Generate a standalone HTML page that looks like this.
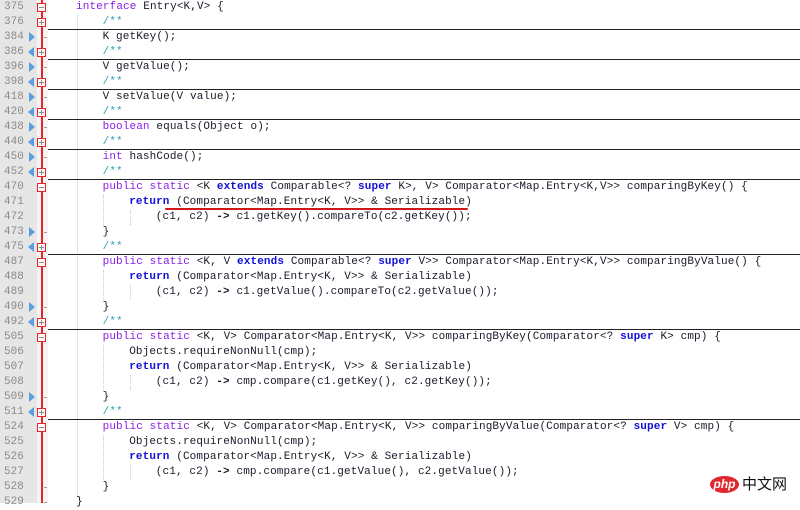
<!DOCTYPE html>
<html><head><meta charset="utf-8"><style>
body{margin:0;width:800px;height:503px;overflow:hidden;background:#fff;position:relative;font-family:"Liberation Mono",monospace;font-size:11px}
.g{position:absolute;left:0;top:0;width:37px;height:503px;background:#e6e6e6}
.f{position:absolute;left:37px;top:0;width:11px;height:503px;background:#f4f4f4}
.rl{position:absolute;left:41px;top:0;width:2px;height:503px;background:#e8242a}
.n{position:absolute;left:4px;width:24px;text-align:left;color:#8a8a8a;line-height:15px;font-size:11px}
.c{position:absolute;line-height:15px;white-space:pre;color:#1a1a2a;letter-spacing:0.12px}
.k{color:#8a1ee8}.b{color:#1010d8;font-weight:bold}.cm{color:#2aa0b0}.o{font-weight:bold}
.sep{position:absolute;left:48px;width:752px;height:1px;background:#222}
.bx{position:absolute;left:37px;width:9px;height:9px;border:1px solid #e8242a;background:#fff;box-sizing:border-box}
.bx:before{content:"";position:absolute;left:1px;top:3px;width:5px;height:1px;background:#888}
.bx.p:after{content:"";position:absolute;left:3px;top:1px;width:1px;height:5px;background:#888}
.ar{position:absolute;left:29px;width:0;height:0;border-top:5px solid transparent;border-bottom:5px solid transparent}
.ar.R{border-left:6px solid #5b9ee0}.ar.L{left:29px;border-right:6px solid #5b9ee0}
.tk{position:absolute;left:44px;width:3px;height:1px;background:#999}
.ig{position:absolute;width:0;border-left:1px dotted #ccc}
</style></head><body>
<div class="g"></div><div class="f"></div>
<div class="ig" style="left:77px;top:15px;height:480px"></div>
<div class="ig" style="left:103px;top:195px;height:30px"></div>
<div class="ig" style="left:130px;top:210px;height:15px"></div>
<div class="ig" style="left:103px;top:270px;height:30px"></div>
<div class="ig" style="left:130px;top:285px;height:15px"></div>
<div class="ig" style="left:103px;top:345px;height:45px"></div>
<div class="ig" style="left:130px;top:375px;height:15px"></div>
<div class="ig" style="left:103px;top:435px;height:45px"></div>
<div class="ig" style="left:130px;top:465px;height:15px"></div>
<div class="rl"></div>
<div id="rows"></div>
<script>
const L=[
[375,1,'<span class="k">interface</span> Entry&lt;K,V&gt; {','m'],
[376,2,'<span class="cm">/**</span>','p',1],
[384,2,'K getKey();','R'],
[386,2,'<span class="cm">/**</span>','pL',1],
[396,2,'V getValue();','R'],
[398,2,'<span class="cm">/**</span>','pL',1],
[418,2,'V setValue(V value);','R'],
[420,2,'<span class="cm">/**</span>','pL',1],
[438,2,'<span class="k">boolean</span> equals(Object o);','R'],
[440,2,'<span class="cm">/**</span>','pL',1],
[450,2,'<span class="k">int</span> hashCode();','R'],
[452,2,'<span class="cm">/**</span>','pL',1],
[470,2,'<span class="k">public static</span> &lt;K <span class="b">extends</span> Comparable&lt;? <span class="b">super</span> K&gt;, V&gt; Comparator&lt;Map.Entry&lt;K,V&gt;&gt; comparingByKey() {','m'],
[471,3,'<span class="b">return</span> (Comparator&lt;Map.Entry&lt;K, V&gt;&gt; &amp; Serializable)',''],
[472,4,'(c1, c2) <span class="o">-&gt;</span> c1.getKey().compareTo(c2.getKey());',''],
[473,2,'}','R'],
[475,2,'<span class="cm">/**</span>','pL',1],
[487,2,'<span class="k">public static</span> &lt;K, V <span class="b">extends</span> Comparable&lt;? <span class="b">super</span> V&gt;&gt; Comparator&lt;Map.Entry&lt;K,V&gt;&gt; comparingByValue() {','m'],
[488,3,'<span class="b">return</span> (Comparator&lt;Map.Entry&lt;K, V&gt;&gt; &amp; Serializable)',''],
[489,4,'(c1, c2) <span class="o">-&gt;</span> c1.getValue().compareTo(c2.getValue());',''],
[490,2,'}','R'],
[492,2,'<span class="cm">/**</span>','pL',1],
[505,2,'<span class="k">public static</span> &lt;K, V&gt; Comparator&lt;Map.Entry&lt;K, V&gt;&gt; comparingByKey(Comparator&lt;? <span class="b">super</span> K&gt; cmp) {','m'],
[506,3,'Objects.requireNonNull(cmp);',''],
[507,3,'<span class="b">return</span> (Comparator&lt;Map.Entry&lt;K, V&gt;&gt; &amp; Serializable)',''],
[508,4,'(c1, c2) <span class="o">-&gt;</span> cmp.compare(c1.getKey(), c2.getKey());',''],
[509,2,'}','R'],
[511,2,'<span class="cm">/**</span>','pL',1],
[524,2,'<span class="k">public static</span> &lt;K, V&gt; Comparator&lt;Map.Entry&lt;K, V&gt;&gt; comparingByValue(Comparator&lt;? <span class="b">super</span> V&gt; cmp) {','m'],
[525,3,'Objects.requireNonNull(cmp);',''],
[526,3,'<span class="b">return</span> (Comparator&lt;Map.Entry&lt;K, V&gt;&gt; &amp; Serializable)',''],
[527,4,'(c1, c2) <span class="o">-&gt;</span> cmp.compare(c1.getValue(), c2.getValue());',''],
[528,2,'}','t'],
[529,1,'}','t']];
let h='';
L.forEach((l,i)=>{const y=i*15;
h+=`<div class="n" style="top:${y}px">${l[0]}</div>`;
h+=`<div class="c" style="left:${76+(l[1]-1)*26.6}px;top:${y}px">${l[2]}</div>`;
const m=l[3];
if(m=='m')h+=`<div class="bx" style="top:${y+3}px"></div>`;
if(m=='p'||m=='pL')h+=`<div class="bx p" style="top:${y+3}px"></div>`;
if(m=='pL')h+=`<div class="ar L" style="left:28px;top:${y+2}px"></div>`;
if(m=='R')h+=`<div class="ar R" style="top:${y+2}px"></div><div class="tk" style="top:${y+7}px"></div>`;
if(m=='t')h+=`<div class="tk" style="top:${y+7}px"></div>`;
if(l[4])h+=`<div class="sep" style="top:${y+14}px"></div>`;
});
document.getElementById('rows').innerHTML=h;
</script>
<div style="position:absolute;left:165px;top:208px;width:303px;height:2px;background:#d01818;border-radius:1px"></div>
<div style="position:absolute;left:710px;top:476px;width:29px;height:17px;border-radius:50%;background:#e0282e;color:#fff;font:italic bold 12px 'Liberation Sans',sans-serif;text-align:center;line-height:16px">php</div>
<div style="position:absolute;left:742px;top:475px;font:15px 'Noto Sans CJK SC',sans-serif;color:#111;line-height:18px">中文网</div>
</body></html>
